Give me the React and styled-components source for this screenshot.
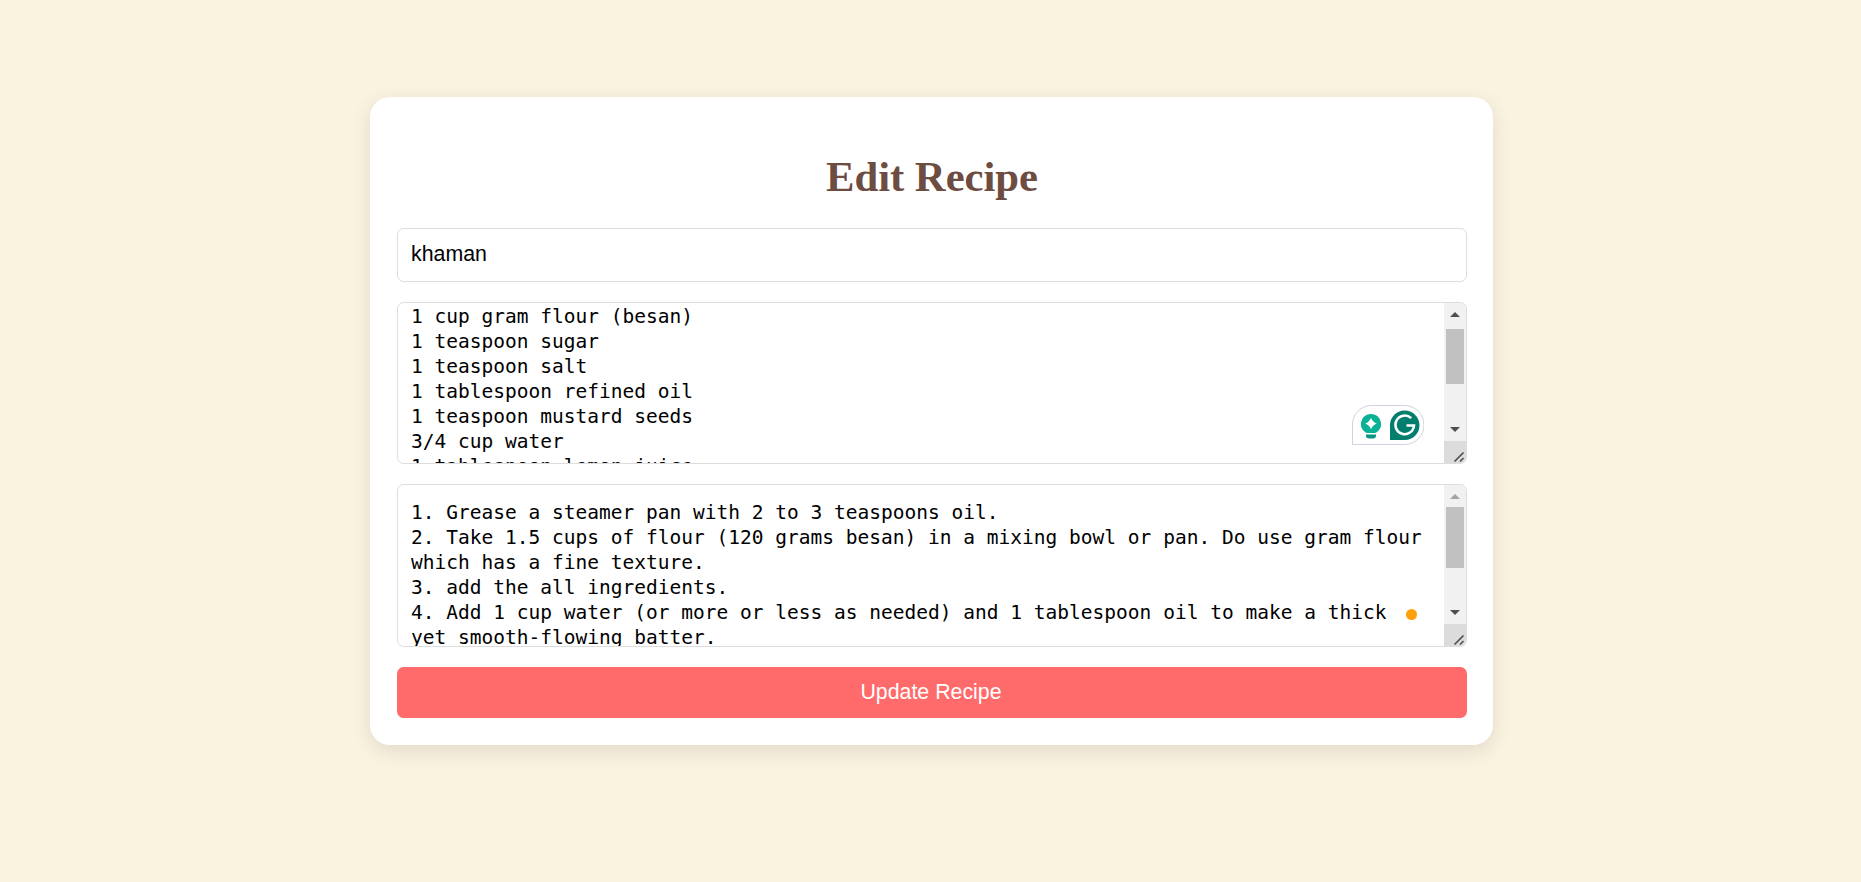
import React from "react";
import styled, { createGlobalStyle } from "styled-components";

const GlobalStyle = createGlobalStyle`
  * { box-sizing: border-box; }
  body { margin: 0; background: #faf3e0; }
`;

const Page = styled.main`
  min-height: 882px;
  padding: 97px 368px 0 370px;
`;

const Card = styled.form`
  display: flex;
  flex-direction: column;
  height: 648px;
  padding: 27px 26px 27px 27px;
  border-radius: 20px;
  background: #fff;
  box-shadow: 0 5.33px 20px rgba(0, 0, 0, 0.1);
`;

const Title = styled.h1`
  margin: 28px 0 27px;
  font: bold 42.67px/49px "Liberation Serif", "Times New Roman", serif;
  color: #6d4c41;
  text-align: center;
`;

const NameInput = styled.input`
  display: block;
  width: 100%;
  height: 54px;
  margin: 0 0 20px;
  padding: 0 13px 2px;
  border: 1px solid #ddd;
  border-radius: 6.67px;
  outline: none;
  font: 21.33px "Liberation Sans", Arial, sans-serif;
  color: #000;
`;

const TextBox = styled.div`
  position: relative;
  display: flex;
  height: ${(p) => p.$height}px;
  margin-bottom: 20px;
  border: 1px solid #ddd;
  border-radius: 6.67px;
  overflow: hidden;
`;

const TextView = styled.div`
  flex: 1;
  padding: ${(p) => p.$top}px 0 0 13px;
  overflow: hidden;
  font: 19.5px/25px "DejaVu Sans Mono", monospace;
  letter-spacing: 0.012px;
  white-space: pre;
  color: #000;
`;

const ScrollColumn = styled.div`
  display: flex;
  flex-direction: column;
  width: 22px;
  background: #f1f1f1;
`;

const Arrow = styled.svg`
  display: block;
  width: 22px;
  height: 22px;
  fill: ${(p) => (p.$muted ? "#a3a3a3" : "#505050")};
`;

const Track = styled.div`
  flex: 1;
  padding: ${(p) => p.$offset}px 2px 0;
`;

const Thumb = styled.div`
  height: ${(p) => p.$size}px;
  background: #c1c1c1;
`;

const Corner = styled.svg`
  display: block;
  width: 22px;
  height: 22px;
  background: #dcdcdc;
`;

const Assistant = styled.div`
  position: absolute;
  right: 42px;
  bottom: 18px;
  width: 72px;
  height: 40px;
  svg { display: block; }
`;

const StatusDot = styled.span`
  position: absolute;
  right: 49px;
  bottom: 26px;
  width: 11px;
  height: 11px;
  border-radius: 50%;
  background: #ff9f0a;
`;

const SubmitButton = styled.button`
  height: 51px;
  padding: 0 2px 1px 0;
  border: 0;
  border-radius: 6.67px;
  background: #ff6b6b;
  color: #fff;
  font: 21.33px "Liberation Sans", Arial, sans-serif;
`;

const ingredients = `1 cup gram flour (besan)
1 teaspoon sugar
1 teaspoon salt
1 tablespoon refined oil
1 teaspoon mustard seeds
3/4 cup water
1 tablespoon lemon juice`;

const steps = `1. Grease a steamer pan with 2 to 3 teaspoons oil.
2. Take 1.5 cups of flour (120 grams besan) in a mixing bowl or pan. Do use gram flour
which has a fine texture.
3. add the all ingredients.
4. Add 1 cup water (or more or less as needed) and 1 tablespoon oil to make a thick
yet smooth-flowing batter.`;

function Scrollbar({ offset, size, atTop }) {
  return (
    <ScrollColumn>
      <Arrow $muted={atTop} viewBox="0 0 22 22"><path d="M6 14 L11 9 L16 14Z" /></Arrow>
      <Track $offset={offset}><Thumb $size={size} /></Track>
      <Arrow viewBox="0 0 22 22"><path d="M6 8 L16 8 L11 13Z" /></Arrow>
      <Corner viewBox="0 0 22 22">
        <path d="M10.5 20.5 L19.5 11.5 M16 20.5 L19.5 17" fill="none" stroke="#505050" strokeWidth="1.7" />
      </Corner>
    </ScrollColumn>
  );
}

function WritingAssistant() {
  return (
    <Assistant>
      <svg width="72" height="40" viewBox="0 0 72 40">
        <path d="M.5 39.5V19.5A19 19 0 0 1 19.5 .5H52.5A19.25 19.25 0 0 1 52.5 39.5Z" fill="#fff" stroke="#cfd0e0" />
        <path d="M19 9a10 10 0 0 0-6 18q1 1 2 1h8q1 0 2-1a10 10 0 0 0-6-18Z" fill="#09b294" />
        <path d="M19 12.7Q20.6 17 24.8 18.5Q20.6 20 19 24.3Q17.4 20 13.2 18.5Q17.4 17 19 12.7Z" fill="#fff" />
        <path d="M14 29.5H24V30.5Q24 33.5 21 33.5H17Q14 33.5 14 30.5Z" fill="#079680" />
        <path d="M38 35V20.5A14.75 14.75 0 1 1 53 35Z" fill="#027e6f" />
        <path d="M59.2 13.2A9.3 9.3 0 1 0 62 20.5H54.5" fill="none" stroke="#fff" strokeWidth="2.5" />
      </svg>
    </Assistant>
  );
}

export default function App() {
  return (
    <>
      <GlobalStyle />
      <Page>
        <Card onSubmit={(e) => e.preventDefault()}>
          <Title>Edit Recipe</Title>
          <NameInput defaultValue="khaman" spellCheck={false} />
          <TextBox $height={162}>
            <TextView $top={1}>{ingredients}</TextView>
            <Scrollbar offset={4} size={55} />
            <WritingAssistant />
          </TextBox>
          <TextBox $height={163}>
            <TextView $top={15}>{steps}</TextView>
            <Scrollbar offset={0} size={61} atTop />
            <StatusDot />
          </TextBox>
          <SubmitButton>Update Recipe</SubmitButton>
        </Card>
      </Page>
    </>
  );
}
